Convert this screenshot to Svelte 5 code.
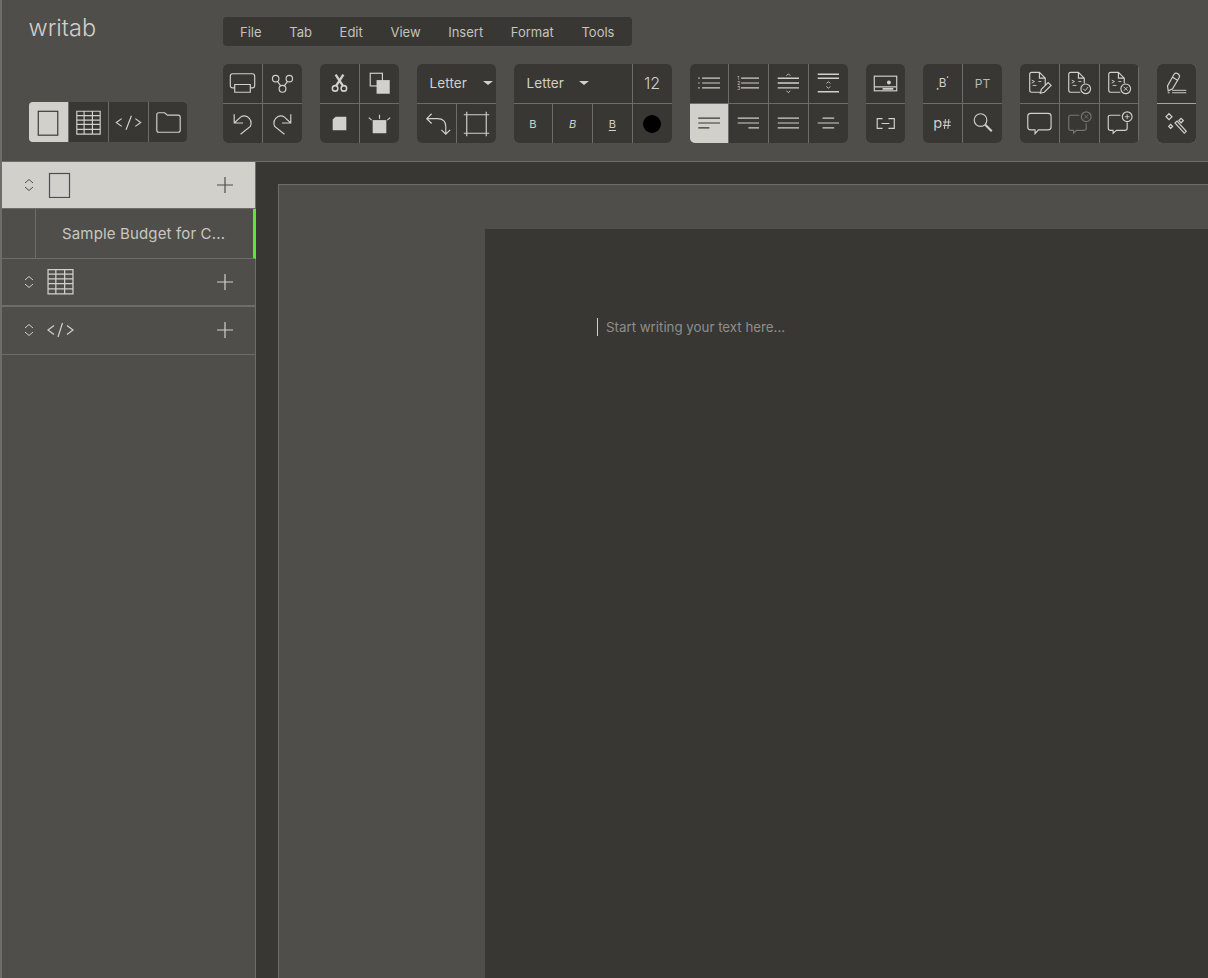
<script>
  const menus = ["File", "Tab", "Edit", "View", "Insert", "Format", "Tools"];
</script>

{#snippet chevrons()}
  <svg class="chev" width="10" height="16" viewBox="0 0 10 16">
    <path d="M1 6 L5 2.5 L9 6 M1 10 L5 13.5 L9 10" />
  </svg>
{/snippet}

{#snippet plus()}
  <svg class="plus" width="18" height="18" viewBox="0 0 18 18">
    <path d="M1 9 H17 M9 1 V17" />
  </svg>
{/snippet}

{#snippet tableIcon()}
  <path d="M8 8.5 H32 V32 H8 Z M8 13 H32 M8 17.5 H32 M8 22 H32 M8 27 H32 M15.5 8.5 V32 M24 8.5 V32" />
{/snippet}

{#snippet docLines()}
  <path class="thin" d="M12 16.5 L15 18 L12 19.5 M13 22 H17 M19 18 H22" />
{/snippet}

<div class="app">
  <header>
    <div class="left">
      <div class="logo">writab</div>
      <div class="views">
        <div class="vcell active">
          <svg viewBox="0 0 40 40"><rect x="9.5" y="8.5" width="20" height="24.5" /></svg>
        </div>
        <div class="vcell">
          <svg viewBox="0 0 40 40">{@render tableIcon()}</svg>
        </div>
        <div class="vcell">
          <svg viewBox="0 0 40 40"><path d="M13 16 L7.5 20 L13 24 M23 13 L17.5 27.5 M27 16 L32.5 20 L27 24" /></svg>
        </div>
        <div class="vcell">
          <svg viewBox="0 0 40 40"><path d="M8 12 Q8 10 10 10 H16 L19 12.5 H30 Q32 12.5 32 14.5 V28 Q32 30 30 30 H10 Q8 30 8 28 Z" /></svg>
        </div>
      </div>
    </div>

    <div class="right">
      <nav class="menu">
        {#each menus as m}
          <span>{m}</span>
        {/each}
      </nav>

      <div class="toolbar">
        <div class="group c2">
          <div class="cell">
            <svg viewBox="0 0 40 40"><path d="M12 24.5 H10 Q7.5 24.5 7.5 22 V12.5 Q7.5 10 10 10 H30 Q32.5 10 32.5 12.5 V22 Q32.5 24.5 30 24.5 H28 M12 21 H28 V29 H12 Z" /></svg>
          </div>
          <div class="cell">
            <svg viewBox="0 0 40 40"><circle cx="13" cy="15" r="3.3" /><circle cx="27" cy="15" r="3.3" /><circle cx="20" cy="25.5" r="3.5" /><path d="M14.8 17.8 L18.2 22.5 M25.2 17.8 L21.8 22.5" /></svg>
          </div>
          <div class="cell">
            <svg viewBox="0 0 40 40"><path d="M11.5 10.5 V19.5 H20.5 M11.5 19.5 L18 13.5 Q21 11 25 13 Q30.5 16.5 28 23 L18 31" /></svg>
          </div>
          <div class="cell">
            <svg viewBox="0 0 40 40"><path d="M28.5 10.5 V19.5 H19.5 M28.5 19.5 L22 13.5 Q19 11 15 13 Q9.5 16.5 12 23 L22 31" /></svg>
          </div>
        </div>

        <div class="group c2">
          <div class="cell">
            <svg viewBox="0 0 40 40">
              <circle cx="15.5" cy="25" r="2.8" stroke-width="1.6" /><circle cx="24.5" cy="25" r="2.8" stroke-width="1.6" />
              <path stroke-width="2.4" d="M16.5 22.5 L24 11 M23.5 22.5 L16 11" />
            </svg>
          </div>
          <div class="cell">
            <svg viewBox="0 0 40 40"><rect x="10.5" y="9.5" width="12.5" height="13" /><rect class="solid" x="17" y="16.5" width="13.5" height="14" /></svg>
          </div>
          <div class="cell">
            <svg viewBox="0 0 40 40"><path class="solid" d="M16 13 H27 V27 H13 V16 Z" /></svg>
          </div>
          <div class="cell">
            <svg viewBox="0 0 40 40"><rect class="solid" x="13" y="16.5" width="14" height="13.5" /><path d="M20 11 V15 M9 14 L12 16.5 M31 14 L28 16.5" /></svg>
          </div>
        </div>

        <div class="group c2">
          <div class="cell wide2 sel">
            <span>Letter</span><i class="caret"></i>
          </div>
          <div class="cell">
            <svg viewBox="0 0 40 40"><path d="M15 10 L10 15 L15 20 M10 15 H21 Q29.5 15 29.5 23 V31 M25 26.5 L29.5 31 L34 26.5" /></svg>
          </div>
          <div class="cell">
            <svg viewBox="0 0 40 40"><path d="M7 11 H33 M7 30 H33 M10 8 V33 M30 8 V33" /></svg>
          </div>
        </div>

        <div class="group c4">
          <div class="cell wide3 sel font">
            <span>Letter</span><i class="caret"></i>
          </div>
          <div class="cell size">12</div>
          <div class="cell fmt">B</div>
          <div class="cell fmt it">B</div>
          <div class="cell fmt un">B</div>
          <div class="cell"><span class="dot"></span></div>
        </div>

        <div class="group c4">
          <div class="cell">
            <svg viewBox="0 0 40 40"><path d="M12.5 14.5 H31 M12.5 19.5 H31 M12.5 24.5 H31 M8.5 14.5 H10 M8.5 19.5 H10 M8.5 24.5 H10" /></svg>
          </div>
          <div class="cell">
            <svg viewBox="0 0 40 40">
              <path d="M12.5 14.5 H31 M12.5 19.5 H31 M12.5 24.5 H31" />
              <text x="8.5" y="16.2" class="tiny">1</text><text x="8.5" y="21.2" class="tiny">2</text><text x="8.5" y="26.2" class="tiny">3</text>
            </svg>
          </div>
          <div class="cell">
            <svg viewBox="0 0 40 40"><path d="M9 14.5 H31 M9 19.5 H31 M9 24.5 H31" stroke-width="1.5" /><path class="thin" d="M18 12 L20 10 L22 12 M18 27.5 L20 29.5 L22 27.5" /></svg>
          </div>
          <div class="cell">
            <svg viewBox="0 0 40 40"><path d="M9 10.5 H31 M9 14.5 H31 M9 28.5 H31" stroke-width="1.5" /><path class="thin" d="M18 20 L20 18 L22 20 M18 23 L20 25 L22 23" /></svg>
          </div>
          <div class="cell on">
            <svg viewBox="0 0 40 40"><path d="M8.5 14.5 H31 M8.5 19.5 H31 M8.5 24.5 H20" /></svg>
          </div>
          <div class="cell">
            <svg viewBox="0 0 40 40"><path d="M9 14.5 H31 M9 19.5 H31 M20 24.5 H31" /></svg>
          </div>
          <div class="cell">
            <svg viewBox="0 0 40 40"><path d="M9 14.5 H31 M9 19.5 H31 M9 24.5 H31" /></svg>
          </div>
          <div class="cell">
            <svg viewBox="0 0 40 40"><path d="M14 14.5 H26 M9 19.5 H31 M14 24.5 H26" /></svg>
          </div>
        </div>

        <div class="group c1">
          <div class="cell">
            <svg viewBox="0 0 40 40"><rect x="8.5" y="12.5" width="23" height="15" /><circle class="solid" cx="23.5" cy="19" r="2" /><path d="M8.5 23.5 H31" stroke-width="1.2" /><path d="M17 25.5 H28" stroke-width="1.6" /></svg>
          </div>
          <div class="cell">
            <svg viewBox="0 0 40 40"><path d="M17 15 H11.5 V25 H17 M23 15 H29 V25 H23 M16 20 H24" /></svg>
          </div>
        </div>

        <div class="group c2">
          <div class="cell">
            <svg viewBox="0 0 40 40"><text x="20" y="24" class="glyph sm">B</text><path class="thin" d="M14 25.5 H16 M15 24.5 V26.5 M24.5 13.5 H26 M25.2 12.8 V14.3" /></svg>
          </div>
          <div class="cell txt">PT</div>
          <div class="cell">
            <svg viewBox="0 0 40 40"><text x="15" y="24.5" class="glyph">p</text><path d="M23 15.5 L22 25.5 M26.5 15.5 L25.5 25.5 M20.5 18.5 H28.5 M20.5 22 H28.5" stroke-width="1" /></svg>
          </div>
          <div class="cell">
            <svg viewBox="0 0 40 40"><circle cx="18" cy="16.5" r="6.5" /><path d="M22.8 21.3 L29.5 28" stroke-width="2.2" /></svg>
          </div>
        </div>

        <div class="group c3">
          <div class="cell">
            <svg viewBox="0 0 40 40">{@render docLines()}<path d="M26 22 V14.5 L20 8.5 H12 Q10 8.5 10 10.5 V27 Q10 29 12 29 H21 M20 8.5 V14.5 H26 M21 30 L22 26 L29 19 L32 22 L25 29 Z" /></svg>
          </div>
          <div class="cell">
            <svg viewBox="0 0 40 40">{@render docLines()}<path d="M25 20 V14.5 L19 8.5 H11 Q9 8.5 9 10.5 V27 Q9 29 11 29 H21 M19 8.5 V14.5 H25" /><circle cx="26.5" cy="25.5" r="5" /><path class="thin" d="M24 25.5 L26 27.5 L29 23.5" /></svg>
          </div>
          <div class="cell">
            <svg viewBox="0 0 40 40">{@render docLines()}<path d="M25 20 V14.5 L19 8.5 H11 Q9 8.5 9 10.5 V27 Q9 29 11 29 H21 M19 8.5 V14.5 H25" /><circle cx="26.5" cy="25.5" r="5" /><path class="thin" d="M24.5 23.5 L28.5 27.5 M28.5 23.5 L24.5 27.5" /></svg>
          </div>
          <div class="cell">
            <svg viewBox="0 0 40 40"><path d="M11 9.5 H29 Q32 9.5 32 12.5 V23.5 Q32 26.5 29 26.5 H19 L15.5 30.5 V26.5 H11 Q8 26.5 8 23.5 V12.5 Q8 9.5 11 9.5 Z" /></svg>
          </div>
          <div class="cell dim">
            <svg viewBox="0 0 40 40"><path d="M20 11.5 H11 Q9 11.5 9 13.5 V25 Q9 27 11 27 H14 V30 L17 27 H25 Q27 27 27 25 V20" /><circle cx="27" cy="13" r="5" /><path class="thin" d="M25 11 L29 15 M29 11 L25 15" /></svg>
          </div>
          <div class="cell">
            <svg viewBox="0 0 40 40"><path d="M21 11.5 H10.5 Q8.5 11.5 8.5 13.5 V25 Q8.5 27 10.5 27 H13.5 V30 L17 27 H26 Q28 27 28 25 V19" /><circle cx="28" cy="13" r="5" /><path class="thin" d="M28 10.5 V15.5 M25.5 13 H30.5" /></svg>
          </div>
        </div>

        <div class="group c1 bright">
          <div class="cell">
            <svg viewBox="0 0 40 40"><path d="M17.5 10.5 Q19 8.5 21.5 10 Q23.8 11.5 22.8 13.8 L16 25.5 L11.5 27.5 L10.8 22.5 Z M16 13.5 L21.5 17" /><path d="M11 29.5 H13 M15.5 27 H30 M15.5 29.5 H30" stroke-width="1" /></svg>
          </div>
          <div class="cell">
            <svg viewBox="0 0 40 40"><path d="M18.5 19.5 L20.5 17.5 L30 28 L28 30 Z" /><path stroke-width="1.3" d="M12.3 10 L15.3 13 L12.3 16 L9.3 13 Z M24.7 14.7 L27 17 L24.7 19.3 L22.4 17 Z M14 21 L16 23 L14 25 L12 23 Z" /></svg>
          </div>
        </div>
      </div>
    </div>
  </header>

  <div class="body">
    <aside>
      <div class="row selected">
        {@render chevrons()}
        <svg class="ricon" width="24" height="26" viewBox="0 0 24 26"><rect x="2.5" y="1.5" width="20" height="24" /></svg>
        {@render plus()}
      </div>
      <div class="doc">
        <div class="indent"></div>
        <div class="title">Sample Budget for C...</div>
      </div>
      <div class="row">
        {@render chevrons()}
        <svg class="ricon" width="27" height="27" viewBox="7 7 26 26">{@render tableIcon()}</svg>
        {@render plus()}
      </div>
      <div class="row thick">
        {@render chevrons()}
        <svg class="ricon" width="27" height="18" viewBox="0 0 27 18"><path d="M7 4.5 L1 9 L7 13.5 M15.5 2 L11 16 M20 4.5 L26 9 L20 13.5" /></svg>
        {@render plus()}
      </div>
    </aside>

    <main>
      <div class="panel">
        <div class="page">
          <div class="placeholder">Start writing your text here...</div>
        </div>
      </div>
    </main>
  </div>
</div>

<style>
  :global(body) {
    background: #4f4e4a;
  }

  .app {
    height: 978px;
    overflow: hidden;
    display: flex;
    flex-direction: column;
    border-left: 2px solid #6e6d69;
    background: #4f4e4a;
    color: #d1d0cb;
    font-family: Inter, "Liberation Sans", sans-serif;
  }

  header {
    height: 160.5px;
    flex: none;
    display: flex;
    border-bottom: 1.5px solid #6e6d69;
    padding-left: 27px;
  }

  .left {
    width: 193.5px;
    flex: none;
  }

  .logo {
    font-size: 23.5px;
    font-weight: 300;
    line-height: 30px;
    margin-top: 13px;
    margin-left: -0.5px;
  }

  .views {
    display: grid;
    grid-template-columns: repeat(4, 1fr);
    gap: 1px;
    width: 158px;
    height: 40px;
    margin-top: 59px;
    background: #6e6d69;
    border-radius: 4px;
    overflow: hidden;
  }

  .vcell {
    background: #383733;
    display: flex;
    align-items: center;
    justify-content: center;
  }

  .vcell.active {
    background: #d1d0cb;
  }

  .vcell.active svg {
    stroke: #383733;
  }

  svg {
    fill: none;
    stroke: #d1d0cb;
    stroke-width: 1.2;
  }

  .vcell svg,
  .cell svg {
    width: 39px;
    height: 39px;
    display: block;
  }

  .solid {
    fill: #d1d0cb;
    stroke: none;
  }

  .thin {
    stroke-width: 0.9;
  }

  .tiny {
    font-size: 5px;
    fill: #d1d0cb;
    stroke: none;
  }

  .glyph {
    font-size: 15px;
    fill: #d1d0cb;
    stroke: none;
    text-anchor: middle;
  }

  .glyph.sm {
    font-size: 12px;
  }

  .right {
    padding-top: 17px;
  }

  .menu {
    width: 409.5px;
    height: 29px;
    box-sizing: border-box;
    display: flex;
    align-items: center;
    justify-content: space-between;
    padding: 0 17.5px;
    background: #383733;
    border-radius: 4px;
    font-size: 13px;
    color: #c4c3be;
  }

  .toolbar {
    display: flex;
    gap: 18px;
    margin-top: 18px;
  }

  .group {
    display: grid;
    grid-template-rows: 1fr 1fr;
    gap: 1.5px 1px;
    height: 79px;
    background: #6e6d69;
    border-radius: 5px;
    overflow: hidden;
    flex: none;
  }

  .c1 { width: 39.5px; grid-template-columns: 1fr; }
  .c2 { width: 79px; grid-template-columns: repeat(2, 1fr); }
  .c3 { width: 118.5px; grid-template-columns: repeat(3, 1fr); }
  .c4 { width: 158px; grid-template-columns: repeat(4, 1fr); }

  .bright {
    background: #a5a49f;
  }

  .cell {
    background: #383733;
    display: flex;
    align-items: center;
    justify-content: center;
    min-width: 0;
    min-height: 0;
    font-size: 12px;
  }

  .wide2 { grid-column: span 2; }
  .wide3 { grid-column: span 3; }

  .sel {
    justify-content: flex-start;
    padding-left: 13px;
    font-size: 13.5px;
    letter-spacing: 0.1px;
  }

  .caret {
    margin-left: 16px;
    border-left: 5.5px solid transparent;
    border-right: 5.5px solid transparent;
    border-top: 4px solid #d1d0cb;
  }

  .font .caret {
    margin-left: 15px;
  }

  .size {
    font-size: 16px;
    font-weight: 300;
  }

  .fmt {
    font-size: 11px;
  }

  .it {
    font-style: italic;
  }

  .un {
    text-decoration: underline;
    text-underline-offset: 2px;
  }

  .dot {
    width: 18px;
    height: 18px;
    border-radius: 50%;
    background: #000;
  }

  .on {
    background: #d1d0cb;
  }

  .on svg {
    stroke: #383733;
  }

  .txt {
    font-size: 12px;
    color: #b9b8b3;
  }

  .dim svg {
    stroke: #75746f;
  }

  .body {
    flex: 1;
    display: flex;
    min-height: 0;
  }

  aside {
    width: 254px;
    flex: none;
    box-sizing: border-box;
    border-right: 1px solid #6e6d69;
  }

  .row {
    height: 47px;
    box-sizing: border-box;
    display: flex;
    align-items: center;
    padding-left: 22px;
    padding-right: 21px;
    border-bottom: 1px solid #6e6d69;
  }

  .row.selected {
    background: #d1d0cb;
  }

  .selected svg {
    stroke: #4f4e4a;
  }

  .thick {
    border-top: 1.5px solid #6e6d69;
    height: 49px;
  }

  .chev {
    flex: none;
    stroke-width: 1;
  }

  .ricon {
    margin-left: 13px;
    flex: none;
  }

  .plus {
    margin-left: auto;
    flex: none;
  }

  .doc {
    height: 50px;
    box-sizing: border-box;
    display: flex;
    border-bottom: 1px solid #6e6d69;
    border-right: 3px solid #62e33a;
    margin-right: -1px;
  }

  .indent {
    width: 33px;
    border-right: 1px solid #6e6d69;
  }

  .title {
    padding-left: 26px;
    line-height: 49px;
    font-size: 15px;
    letter-spacing: 0.15px;
    white-space: nowrap;
    color: #c9c8c3;
  }

  main {
    flex: 1;
    min-width: 0;
    background: #383733;
    padding: 22px 0 0 22px;
    display: flex;
  }

  .panel {
    flex: 1;
    display: flex;
    background: #4f4e4a;
    border-top: 1px solid #6e6d69;
    border-left: 1px solid #6e6d69;
    padding: 44px 0 0 206px;
  }

  .page {
    flex: 1;
    background: #383733;
    padding: 89px 0 0 112px;
  }

  .placeholder {
    height: 18px;
    line-height: 18px;
    padding-left: 8px;
    border-left: 1px solid #d1d0cb;
    font-size: 13.3px;
    color: #8f8e8a;
  }
</style>
